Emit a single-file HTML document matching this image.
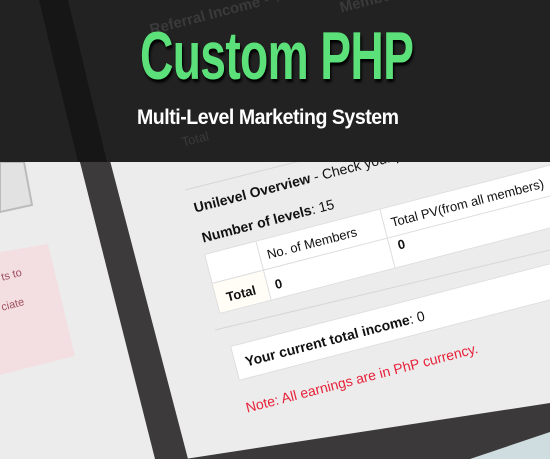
<!DOCTYPE html>
<html><head><meta charset="utf-8"><style>
html,body{margin:0;padding:0}
body{width:550px;height:459px;overflow:hidden;position:relative;background:#ececec;font-family:"Liberation Sans",Arial,sans-serif}
.r{position:absolute;transform:rotate(-14.5deg);transform-origin:0 0;white-space:nowrap}
svg{position:absolute;left:0;top:0}
</style></head><body>
<svg width="550" height="459">
<polygon points="0,252 48,244 75,356 0,375" fill="#f3dfe1"/>
<polygon points="0,162 24,162 32,205 0,212" fill="#e2e2e2" stroke="#bbb" stroke-width="2"/>
<polygon points="39,0 68,0 188,459 155,459" fill="#3c3a3b"/>
<polygon points="185,459 550,403 550,459" fill="#3b3939"/>
<polygon points="470,459 550,432 550,459" fill="#cfdde0"/>
<line x1="215" y1="330" x2="550" y2="250" stroke="#d6d6d6" stroke-width="1"/>
<line x1="185" y1="190" x2="550" y2="98" stroke="#d6d6d6" stroke-width="1"/>
</svg>
<div class="r" style="left:192px;top:200px;font-size:14px;color:#111"><b>Unilevel Overview</b> - Check your progress!</div>
<div class="r" style="left:200px;top:230px;font-size:14px;color:#111"><b>Number of levels</b>: 15</div>
<div class="r" style="left:204px;top:254px;width:400px;height:60px;background:#fff;border:1px solid #ddd;font-size:13px;color:#111">
 <div style="position:absolute;left:0;top:30px;width:52px;height:30px;background:#fffdf6"></div>
 <div style="position:absolute;left:52px;top:0;width:1px;height:60px;background:#ddd"></div>
 <div style="position:absolute;left:180px;top:0;width:1px;height:60px;background:#ddd"></div>
 <div style="position:absolute;left:0;top:29px;width:400px;height:1px;background:#ddd"></div>
 <div style="position:absolute;left:60px;top:8px">No. of Members</div>
 <div style="position:absolute;left:188px;top:8px">Total PV(from all members)</div>
 <div style="position:absolute;left:10px;top:39px;font-weight:bold">Total</div>
 <div style="position:absolute;left:60px;top:39px;font-weight:bold">0</div>
</div>
<div class="r" style="left:396px;top:238px;font-size:13px;font-weight:bold;color:#111">0</div>
<div class="r" style="left:230px;top:346px;width:400px;height:34px;background:#fff;border:1px solid #ddd;font-size:14px;color:#111"><div style="position:absolute;left:10px;top:10px"><b>Your current total income</b>: 0</div></div>
<div class="r" style="left:244px;top:400px;font-size:14px;color:#e8213a">Note: All earnings are in PhP currency.</div>
<div class="r" style="left:0px;top:272px;font-size:11px;color:#a05060">ts to</div>
<div class="r" style="left:0px;top:302px;font-size:11px;color:#a05060">ciate</div>
<div style="position:absolute;left:0;top:0;width:550px;height:162px;background:#222"></div>
<div style="position:absolute;left:0;top:0;width:550px;height:162px;"><svg width="550" height="162"><polygon points="39,0 68,0 107,162 78,162" fill="#161616"/></svg></div>
<div class="r" style="left:148px;top:22px;font-size:15px;font-weight:bold;color:#3a3a3a">Referral Income <span style="font-weight:normal">- Tell y</span></div>
<div class="r" style="left:338px;top:0px;font-size:15px;font-weight:bold;color:#3a3a3a">Member cou</div>
<div class="r" style="left:180px;top:135px;font-size:13px;color:#3a3a3a">Total</div>
<div style="position:absolute;left:140px;top:20px;font-size:68px;font-weight:bold;color:#5ce17a;letter-spacing:-1px;line-height:72px;text-shadow:2px 3px 3px #000;transform:scaleX(0.68);transform-origin:0 0">Custom PHP</div>
<div style="position:absolute;left:137px;top:104px;font-size:21px;font-weight:bold;color:#fff;line-height:28px;letter-spacing:-0.5px;transform:scaleX(0.93);transform-origin:0 0">Multi-Level Marketing System</div>
</body></html>
